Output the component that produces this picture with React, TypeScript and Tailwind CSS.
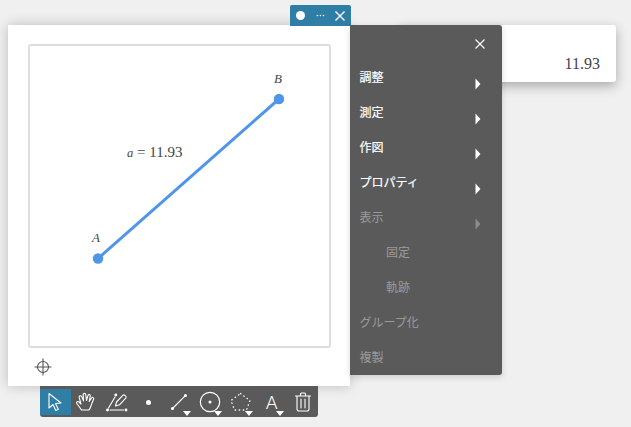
import React from "react";

const jp = "font-['Roboto','Noto_Sans_CJK_JP',sans-serif]";

function Arrow({ dim }: { dim?: boolean }) {
  return (
    <svg width="6" height="12" viewBox="0 0 6 12" className={`mt-[13px] ${dim ? "opacity-30" : ""}`}>
      <path d="M0.5 0.5 L5.5 6 L0.5 11.5 Z" fill="#fff" />
    </svg>
  );
}

function Row({ label, arrow, dim, indent }: { label: string; arrow?: boolean; dim?: boolean; indent?: boolean }) {
  return (
    <div className={`flex h-[35px] items-center justify-between pr-[21px] ${indent ? "pl-[36px]" : "pl-[9.5px]"}`}>
      <span className={`text-[12px] leading-none ${dim ? "text-[#9a9a9a]" : "text-white [-webkit-text-stroke:0.2px_#fff]"}`}>{label}</span>
      {arrow && <Arrow dim={dim} />}
    </div>
  );
}

function Caret() {
  return (
    <svg width="8" height="5" viewBox="0 0 8 5" className="absolute bottom-[-1px] right-[3px]">
      <path d="M0 0 H8 L4 5 Z" fill="#fff" />
    </svg>
  );
}

function Tool({ children, active, caret }: { children: React.ReactNode; active?: boolean; caret?: boolean }) {
  return (
    <div className={`relative flex h-[26px] w-[31px] items-center justify-center ${active ? "bg-[#2e7ea6]" : ""}`}>
      {children}
      {caret && <Caret />}
    </div>
  );
}

const ic = { fill: "none", stroke: "#fff", strokeWidth: 1.1, strokeLinecap: "round" as const, strokeLinejoin: "round" as const };

export default function App() {
  return (
    <div className={`relative h-[427px] w-[631px] overflow-hidden bg-[#f0f0f0] ${jp}`}>
      {/* value card */}
      <div className="absolute left-[400px] top-[25px] flex h-[57px] w-[216px] items-end justify-end rounded-[3px] bg-white pb-[10px] pr-[16px] shadow-[0_4px_12px_rgba(0,0,0,0.3)]">
        <span className="font-['Liberation_Serif',serif] text-[16px] leading-none text-[#444]">11.93</span>
      </div>

      {/* main card */}
      <div className="absolute left-[8px] top-[25px] flex h-[361px] w-[342px] flex-col bg-white shadow-[0_0_12px_rgba(0,0,0,0.22)]">
        <div className="ml-[20px] mt-[19px] h-[304px] w-[303px] rounded-[3px] border-2 border-[#dddddd]">
          <svg width="299" height="300" viewBox="0 0 299 300" className="block">
            <line x1="68" y1="212.5" x2="249" y2="53" stroke="#4f96ea" strokeWidth="3" />
            <circle cx="68" cy="212.5" r="5.2" fill="#4f96ea" />
            <circle cx="249" cy="53" r="5.2" fill="#4f96ea" />
            <text x="62" y="196" fontFamily="'Liberation Serif',serif" fontStyle="italic" fontSize="13" fill="#444">A</text>
            <text x="244" y="37" fontFamily="'Liberation Serif',serif" fontStyle="italic" fontSize="13" fill="#444">B</text>
            <text x="97" y="111" fontFamily="'Liberation Serif',serif" fontSize="15" fill="#444">
              <tspan fontStyle="italic" fontSize="12.5">a</tspan> = 11.93
            </text>
          </svg>
        </div>
        <div className="ml-[26px] mt-[10px] h-[18px] w-[18px]">
          <svg width="18" height="18" viewBox="0 0 18 18" fill="none" stroke="#555" strokeWidth="1.1">
            <circle cx="9" cy="9" r="5.5" />
            <path d="M9 0.5 V17.5 M0.5 9 H17.5" />
          </svg>
        </div>
      </div>

      {/* title tab */}
      <div className="absolute left-[290px] top-[5px] flex h-[21px] w-[61px] items-center rounded-t-[2px] bg-[#2e7ea6] pl-[6px]">
        <span className="h-[9px] w-[9px] rounded-full bg-white" />
        <svg width="9" height="3" viewBox="0 0 9 3" className="ml-[11px]">
          <circle cx="1.5" cy="1.5" r="0.8" fill="#fff" />
          <circle cx="4.5" cy="1.5" r="0.8" fill="#fff" />
          <circle cx="7.5" cy="1.5" r="0.8" fill="#fff" />
        </svg>
        <svg width="10" height="10" viewBox="0 0 10 10" className="ml-[10px]">
          <path d="M0.5 0.5 L9.5 9.5 M9.5 0.5 L0.5 9.5" stroke="#fff" strokeWidth="1.4" />
        </svg>
      </div>

      {/* context menu */}
      <div className="absolute left-[350px] top-[25px] h-[350px] w-[152px] rounded-r-[3px] bg-[#5a5a5a] shadow-[0_2px_6px_rgba(0,0,0,0.15)]">
        <div className="flex h-[35px] items-center justify-end pr-[17px] pt-[2px]">
          <svg width="10" height="10" viewBox="0 0 10 10">
            <path d="M0.5 0.5 L9.5 9.5 M9.5 0.5 L0.5 9.5" stroke="#fff" strokeWidth="1.1" />
          </svg>
        </div>
        <Row label="調整" arrow />
        <Row label="測定" arrow />
        <Row label="作図" arrow />
        <Row label="プロパティ" arrow />
        <Row label="表示" arrow dim />
        <Row label="固定" dim indent />
        <Row label="軌跡" dim indent />
        <Row label="グループ化" dim />
        <Row label="複製" dim />
      </div>

      {/* toolbar */}
      <div className="absolute left-[40px] top-[386px] flex h-[31px] w-[278px] items-start rounded-b-[3px] bg-[#5a5a5a] pt-[3px]">
        <Tool active>
          <svg width="18" height="20" viewBox="0 0 18 20" {...ic}>
            <path d="M3 1.5 V16 L7 12.5 L9.8 18.5 L12.3 17.3 L9.5 11.5 L15 11 Z" />
          </svg>
        </Tool>
        <Tool>
          <svg width="22" height="22" viewBox="0 0 22 22" {...ic}>
            <path d="M6.5 19 C5 16.5 3.2 14.5 1.8 12.5 C1 11 2.8 10 4 11 L6 13 L4.2 6.5 C3.8 4.8 6 4 6.7 5.6 L8.5 10 L8.2 3.6 C8.2 2 10.6 2 10.8 3.6 L11.5 9.5 L13 4.4 C13.5 3 15.6 3.5 15.3 5.1 L14.2 10.5 L16.6 7 C17.5 5.8 19.4 6.8 18.6 8.3 C17.4 11 16.4 13.5 15.6 16 C15.2 17.5 14.5 18.4 13.8 19 Z" />
          </svg>
        </Tool>
        <Tool>
          <svg width="24" height="22" viewBox="0 0 24 22" {...ic}>
            <path d="M3.5 17 L10 6" />
            <circle cx="10.8" cy="4" r="0.9" fill="#fff" />
            <circle cx="2.5" cy="19" r="0.9" fill="#fff" />
            <circle cx="21" cy="19" r="0.9" fill="#fff" />
            <path d="M5 19 H18.5" />
            <path d="M10.5 15 L11.5 11 L18 4.2 C19 3.2 22 5.3 21 6.8 L14.5 13.8 Z" />
          </svg>
        </Tool>
        <Tool>
          <span className="h-[5px] w-[5px] rounded-full bg-white" />
        </Tool>
        <Tool caret>
          <svg width="18" height="18" viewBox="0 0 18 18" {...ic}>
            <path d="M3.5 14.5 L14.5 3.5" />
            <circle cx="2.5" cy="15.5" r="1" fill="#fff" />
            <circle cx="15.5" cy="2.5" r="1" fill="#fff" />
          </svg>
        </Tool>
        <Tool caret>
          <svg width="22" height="22" viewBox="0 0 22 22" {...ic}>
            <circle cx="11" cy="11" r="9.7" strokeWidth="1.2" />
            <circle cx="11" cy="11" r="1" fill="#fff" />
          </svg>
        </Tool>
        <Tool caret>
          <svg width="22" height="20" viewBox="0 0 22 20" fill="none" stroke="#fff" strokeWidth="1.3" strokeLinecap="round" strokeDasharray="0.5 3.6">
            <path d="M10.5 1.5 L20 8.5 L16.5 18 H4.5 L1 8.5 Z" />
          </svg>
        </Tool>
        <Tool caret>
          <span className="font-['Roboto',sans-serif] text-[19px] font-light leading-none text-white">A</span>
        </Tool>
        <Tool>
          <svg width="16" height="20" viewBox="0 0 16 20" {...ic}>
            <path d="M0.5 4 H15.5 M5.5 4 V2 C5.5 1.4 6 1 6.5 1 H9.5 C10 1 10.5 1.4 10.5 2 V4 M2 4 V17 C2 18 2.8 19 4 19 H12 C13.2 19 14 18 14 17 V4 M6 7 V16 M10 7 V16" />
          </svg>
        </Tool>
      </div>
    </div>
  );
}
